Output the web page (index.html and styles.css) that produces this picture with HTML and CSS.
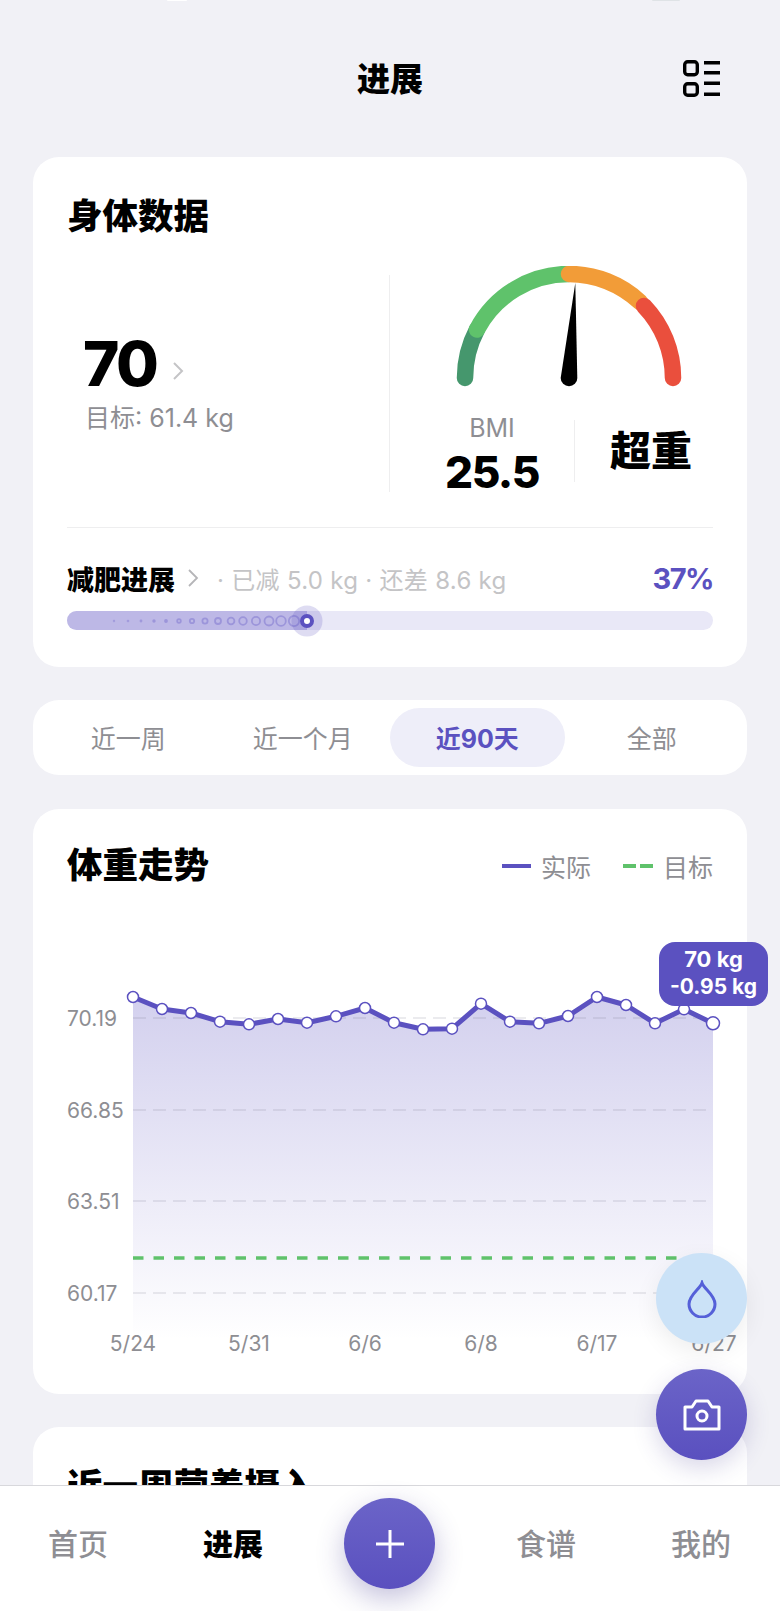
FILE: index.html

```html
<!DOCTYPE html>
<html lang="zh-CN">
<head>
  <meta charset="UTF-8">
  <title>进展</title>
  <link rel="stylesheet" href="styles.css">
</head>
<body>
  <div class="page">
    <div class="status-clip"><span class="clip-a"></span><span class="clip-b"></span></div>

    <header class="top-bar">
      <h1>进展</h1>
      <svg class="list-icon" width="40" height="40" viewBox="0 0 40 40" fill="none" stroke="#000" stroke-width="3.4">
        <rect x="3.700" y="2.700" width="12.600" height="13" rx="3"/>
        <rect x="3.700" y="24.700" width="12.600" height="11.600" rx="3"/>
        <path d="M23 3.700h16M23 13.700h16M23 24.300h16M23 35.300h16"/>
      </svg>
    </header>

    <section class="card body-card">
      <h2>身体数据</h2>
      <div class="stats">
        <div class="weight">
          <div class="weight-line">
            <span class="weight-num">70</span>
            <svg class="weight-arrow" width="12" height="20" viewBox="0 0 12 20" fill="none" stroke="#c4c4c6" stroke-width="2"><path d="M2 2l8 8-8 8"/></svg>
          </div>
          <div class="weight-goal">目标: 61.4 kg</div>
        </div>
        <div class="bmi">
          <svg class="gauge" width="322" height="124" viewBox="390 266 322 124" fill="none" stroke-width="16.5" stroke-linecap="round">
            <path d="M465 378A104 104 0 0 1 477 329.500" stroke="#45976d"/>
            <path d="M477 329.500A104 104 0 0 1 569 274" stroke="#5fc26b"/>
            <path d="M569 274A104 104 0 0 1 640 302" stroke="#f29c38"/>
            <path d="M644 306A104 104 0 0 1 673 378" stroke="#ea4f3d"/>
            <path d="M575.300 283L577.300 378A8.300 8.300 0 0 1 560.700 378Z" fill="#000" stroke="none"/>
          </svg>
          <div class="bmi-row">
            <div class="bmi-value">
              <div class="bmi-label">BMI</div>
              <div class="bmi-num">25.5</div>
            </div>
            <div class="bmi-status">超重</div>
          </div>
        </div>
      </div>

      <div class="progress-head">
        <span class="progress-title">减肥进展</span>
        <svg width="12" height="20" viewBox="0 0 12 20" fill="none" stroke="#b5b5b8" stroke-width="1.800"><path d="M2 2l8 8-8 8"/></svg>
        <span class="progress-note">· 已减 5.0 kg · 还差 8.6 kg</span>
        <span class="progress-pct">37%</span>
      </div>
      <svg class="progress-bar" width="646" height="40" viewBox="67 601 646 40">
        <rect x="67" y="611" width="646" height="19" rx="9.500" fill="#e9e8f7"/>
        <path d="M76.500 611H307V630H76.500A9.500 9.500 0 0 1 76.500 611Z" fill="#bdb8e6"/>
        <g fill="none" stroke="#9c95da" stroke-width="1.800">
          <circle cx="114" cy="621" r=".3"/><circle cx="128" cy="621" r=".4"/><circle cx="141" cy="621" r=".5"/>
          <circle cx="154" cy="621" r=".8"/><circle cx="166" cy="621" r="1"/><circle cx="179" cy="621" r="1.800"/>
          <circle cx="192" cy="621" r="2.200"/><circle cx="205" cy="621" r="2.600"/><circle cx="218" cy="621" r="3"/>
          <circle cx="231" cy="621" r="3.400"/><circle cx="243" cy="621" r="3.800"/><circle cx="256" cy="621" r="4.100"/>
          <circle cx="269" cy="621" r="4.500"/><circle cx="281" cy="621" r="4.800"/><circle cx="294" cy="621" r="5.200"/>
        </g>
        <circle cx="307" cy="621" r="15.500" fill="#5b51c0" fill-opacity=".2"/>
        <circle cx="307" cy="621" r="5" fill="#fff" stroke="#5b51c0" stroke-width="4"/>
      </svg>
    </section>

    <nav class="card range-tabs">
      <span class="tab">近一周</span>
      <span class="tab">近一个月</span>
      <span class="tab active">近90天</span>
      <span class="tab">全部</span>
    </nav>

    <section class="card chart-card">
      <div class="chart-head">
        <h2>体重走势</h2>
        <div class="legend">
          <span class="legend-item"><i class="swatch-solid"></i>实际</span>
          <span class="legend-item"><i class="swatch-dash"></i>目标</span>
        </div>
      </div>
      <div class="chart">
        <svg width="680" height="400" viewBox="67 960 680 400" fill="none">
          <defs>
            <linearGradient id="areaFill" x1="0" y1="0" x2="0" y2="1">
              <stop offset="0" stop-color="#5b51c0" stop-opacity=".27"/>
              <stop offset="1" stop-color="#5b51c0" stop-opacity="0"/>
            </linearGradient>
          </defs>
          <path d="M133 997L162 1009L191 1013L220 1021.700L249 1024.300L278 1019L307 1022.700L336 1016.300L365 1008L394 1022.700L423 1029.300L452 1028.700L481 1003.700L510 1021.700L539 1023.300L568 1016L597 997L626 1005L655 1023.300L684 1009.300L713 1023.300V1340H133Z" fill="url(#areaFill)"/>
          <g stroke="#78788c" stroke-opacity=".2" stroke-width="1.300" stroke-dasharray="13 7">
            <path d="M133 1018H713M133 1110H713M133 1201H713M133 1293H713"/>
          </g>
          <path d="M133 1258H700" stroke="#5fc26b" stroke-width="3.500" stroke-dasharray="10.500 10"/>
          <path d="M133 997L162 1009L191 1013L220 1021.700L249 1024.300L278 1019L307 1022.700L336 1016.300L365 1008L394 1022.700L423 1029.300L452 1028.700L481 1003.700L510 1021.700L539 1023.300L568 1016L597 997L626 1005L655 1023.300L684 1009.300L713 1023.300" stroke="#5b51c0" stroke-width="5" stroke-linejoin="round"/>
          <g fill="#fff" stroke="#5b51c0" stroke-width="1.500">
            <circle cx="133" cy="997" r="5.500"/><circle cx="162" cy="1009" r="5.500"/><circle cx="191" cy="1013" r="5.500"/>
            <circle cx="220" cy="1021.700" r="5.500"/><circle cx="249" cy="1024.300" r="5.500"/><circle cx="278" cy="1019" r="5.500"/>
            <circle cx="307" cy="1022.700" r="5.500"/><circle cx="336" cy="1016.300" r="5.500"/><circle cx="365" cy="1008" r="5.500"/>
            <circle cx="394" cy="1022.700" r="5.500"/><circle cx="423" cy="1029.300" r="5.500"/><circle cx="452" cy="1028.700" r="5.500"/>
            <circle cx="481" cy="1003.700" r="5.500"/><circle cx="510" cy="1021.700" r="5.500"/><circle cx="539" cy="1023.300" r="5.500"/>
            <circle cx="568" cy="1016" r="5.500"/><circle cx="597" cy="997" r="5.500"/><circle cx="626" cy="1005" r="5.500"/>
            <circle cx="655" cy="1023.300" r="5.500"/><circle cx="684" cy="1009.300" r="5.500"/><circle cx="713" cy="1023.300" r="6.500"/>
          </g>
          <g class="axis-y">
            <text x="67" y="1026">70.19</text>
            <text x="67" y="1118">66.85</text>
            <text x="67" y="1209">63.51</text>
            <text x="67" y="1301">60.17</text>
          </g>
          <g class="axis-x">
            <text x="133" y="1351">5/24</text>
            <text x="249" y="1351">5/31</text>
            <text x="365" y="1351">6/6</text>
            <text x="481" y="1351">6/8</text>
            <text x="597" y="1351">6/17</text>
            <text x="714" y="1351">6/27</text>
          </g>
        </svg>
        <div class="tooltip">70 kg<br><span class="tooltip-delta">-0.95 kg</span></div>
      </div>
    </section>

    <section class="card next-card">
      <h2>近一周营养摄入</h2>
    </section>

    <button class="fab fab-water">
      <svg width="34" height="38" viewBox="0 0 34 38" fill="none" stroke="#5560d8" stroke-width="3"><path d="M17 3C15 9 4 15 4 24a13 13 0 0 0 26 0C30 15 19 9 17 3Z"/></svg>
    </button>
    <button class="fab fab-camera">
      <svg width="40" height="34" viewBox="0 0 40 34" fill="none" stroke="#fff" stroke-width="3" stroke-linejoin="round"><path d="M3 9h7l4-6h12l4 6h7v22H3Z"/><circle cx="20" cy="18" r="5"/></svg>
    </button>

    <footer class="tab-bar">
      <span class="nav-item">首页</span>
      <span class="nav-item current">进展</span>
      <button class="add-btn">
        <svg width="28" height="28" viewBox="0 0 28 28" stroke="#fff" stroke-width="3"><path d="M14 0V28M0 14H28"/></svg>
      </button>
      <span class="nav-item">食谱</span>
      <span class="nav-item">我的</span>
    </footer>
  </div>
</body>
</html>
```

FILE: styles.css

```css
* { box-sizing: border-box; }
body {
  margin: 0;
  background-color: #f1f1f6;
  font-family: Inter, "Noto Sans CJK SC", sans-serif;
  color: #000;
}
.page {
  position: relative;
  width: 780px;
  height: 1611px;
  overflow: hidden;
}
.status-clip {
  position: absolute;
  top: 0;
  left: 0;
  width: 100%;
}
.clip-a, .clip-b {
  position: absolute;
  top: 0;
  height: 1px;
  border-radius: 0 0 3px 3px;
}
.clip-a { left: 167px; width: 20px; background-color: #fff; }
.clip-b { left: 652px; width: 28px; background-color: #dfe3e6; }

.top-bar {
  position: relative;
  height: 157px;
  display: flex;
  justify-content: center;
  padding-top: 55px;
}
.top-bar h1 {
  margin: 0;
  font-size: 33px;
  line-height: 48px;
  font-weight: 900;
}
.list-icon {
  position: absolute;
  top: 59px;
  right: 59px;
}

.card {
  background-color: #fff;
  border-radius: 26px;
  margin: 0 33px;
}
h2 {
  margin: 0;
  font-size: 35.5px;
  line-height: 44px;
  font-weight: 900;
}

.body-card {
  height: 510px;
  padding: 38px 34px 0;
}
.stats {
  display: flex;
  height: 217px;
  margin-top: 36px;
}
.weight {
  width: 323px;
  padding: 0 0 2px 16px;
  border-right: 1.5px solid #eeeeef;
  display: flex;
  flex-direction: column;
  justify-content: center;
}
.weight-line {
  display: flex;
  align-items: center;
  gap: 16px;
}
.weight-arrow { margin-top: 14px; }
.weight-num {
  font-size: 62px;
  line-height: 68px;
  font-weight: 800;
  letter-spacing: -2.5px;
}
.weight-goal {
  margin: 3px 0 0 2px;
  font-size: 25px;
  line-height: 34px;
  color: #8e8e93;
}
.bmi {
  flex: 1;
  margin-top: -9px;
}
.gauge { display: block; }
.bmi-row {
  display: flex;
  align-items: stretch;
  height: 62px;
  margin-top: 30px;
  padding-left: 18px;
}
.bmi-value {
  width: 167px;
  padding-left: 2px;
  border-right: 1.5px solid #eeeeef;
  text-align: center;
}
.bmi-label {
  margin-top: -7px;
  font-size: 25px;
  line-height: 30px;
  color: #8e8e93;
}
.bmi-num {
  margin-top: 6px;
  font-size: 44px;
  line-height: 46px;
  font-weight: 800;
  letter-spacing: -1.5px;
}
.bmi-status {
  flex: 1;
  padding: 0 0 0 14px;
  text-align: center;
  font-size: 41px;
  line-height: 62px;
  font-weight: 900;
}

.progress-head {
  display: flex;
  align-items: center;
  height: 70px;
  margin-top: 35px;
  padding-top: 31px;
  border-top: 1.5px solid #eeeeef;
}
.progress-title {
  font-size: 27px;
  font-weight: 900;
  margin-right: 12px;
}
.progress-note {
  margin-left: 18px;
  font-size: 24px;
  letter-spacing: .3px;
  color: #c4c4c6;
}
.progress-pct {
  margin-left: auto;
  font-size: 29px;
  font-weight: 700;
  letter-spacing: -1.5px;
  color: #5b51c0;
}
.progress-bar {
  display: block;
  margin-top: 4px;
}

.range-tabs {
  display: grid;
  grid-template-columns: repeat(4, 1fr);
  height: 75px;
  margin-top: 33px;
  padding: 8px;
}
.tab {
  display: flex;
  align-items: center;
  justify-content: center;
  padding-bottom: 2px;
  font-size: 25px;
  color: #8e8e93;
  border-radius: 30px;
}
.tab.active {
  background-color: #eeeef9;
  color: #5b51c0;
  font-weight: 700;
}

.chart-card {
  height: 585px;
  margin-top: 34px;
  padding: 35px 34px 0;
}
.chart-head {
  display: flex;
  align-items: center;
  justify-content: space-between;
}
.legend {
  display: flex;
  gap: 32px;
}
.legend-item {
  display: flex;
  align-items: center;
  gap: 10px;
  font-size: 25px;
  color: #8e8e93;
}
.swatch-solid {
  width: 29px;
  height: 4px;
  background-color: #5b51c0;
}
.swatch-dash {
  width: 30px;
  height: 4px;
  background: repeating-linear-gradient(90deg, #5fc26b 0 13px, transparent 13px 17px);
}
.chart {
  position: relative;
  width: 680px;
  margin-top: 72px;
}
.chart svg { display: block; overflow: visible; }
.axis-y text, .axis-x text {
  font-size: 21px;
  fill: #8e8e93;
}
.axis-x text { text-anchor: middle; }
.tooltip {
  position: absolute;
  left: 592px;
  top: -18px;
  width: 109px;
  height: 64px;
  padding-top: 4px;
  background-color: #5b51c0;
  border-radius: 16px;
  color: #fff;
  font-size: 22px;
  line-height: 27px;
  font-weight: 700;
  text-align: center;
}
.tooltip-delta { font-size: 21px; }

.next-card {
  height: 200px;
  margin-top: 33px;
  padding: 38px 34px 0;
}

.fab {
  position: absolute;
  left: 656px;
  width: 91px;
  height: 91px;
  padding: 0;
  border: none;
  border-radius: 50%;
  display: flex;
  align-items: center;
  justify-content: center;
}
.fab-water {
  top: 1253px;
  background-color: #cbe2f7;
  box-shadow: 0 8px 24px rgba(0,0,0,0.07);
}
.fab-camera {
  top: 1369px;
  background: linear-gradient(#6b64c8, #5a50bf);
  box-shadow: 0 8px 24px rgba(60,50,140,0.2);
}

.tab-bar {
  position: absolute;
  left: 0;
  right: 0;
  top: 1485px;
  height: 126px;
  background-color: #fff;
  border-top: 1.5px solid #d8d8dc;
  display: grid;
  grid-template-columns: 78px 155px 157px 156px 155px;
}
.nav-item {
  font-size: 30px;
  font-weight: 500;
  line-height: 44px;
  margin-top: 36px;
  color: #8e8e93;
  text-align: center;
  width: 60px;
  justify-self: end;
  transform: translateX(30px);
}
.nav-item.current { color: #000; font-weight: 900; }
.add-btn {
  justify-self: end;
  width: 91px;
  height: 91px;
  margin-top: 12px;
  padding: 0;
  border: none;
  border-radius: 50%;
  background: linear-gradient(#6b64c8, #5a50bf);
  box-shadow: 0 10px 28px rgba(60,50,140,0.3);
  display: flex;
  align-items: center;
  justify-content: center;
  transform: translateX(45px);
}
```
